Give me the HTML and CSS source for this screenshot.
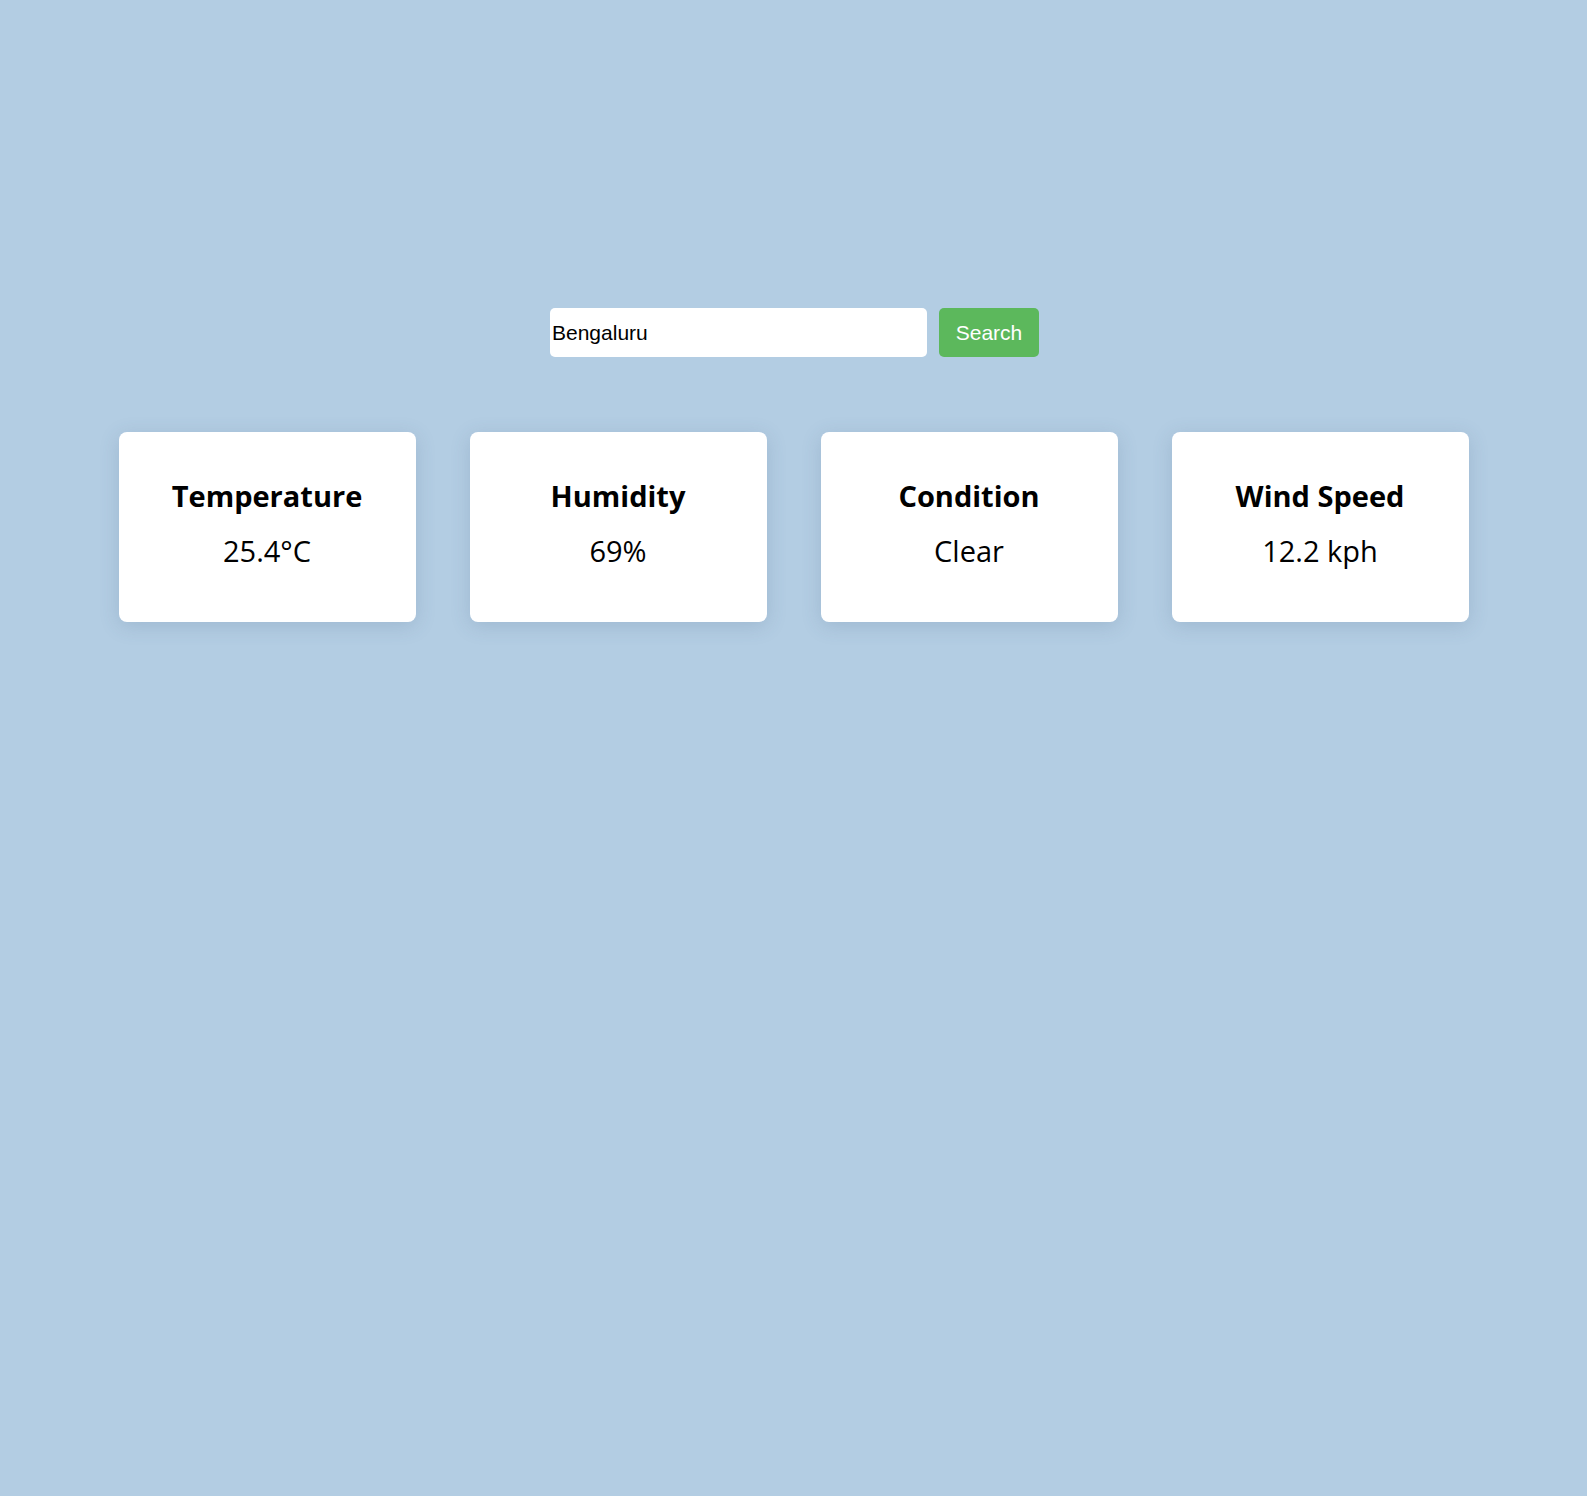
FILE: index.html
```html
<!DOCTYPE html>
<html lang="en">
<head>
<meta charset="utf-8">
<title>Weather</title>
<link rel="stylesheet" href="styles.css">
</head>
<body>
<main class="app">
  <form class="search" onsubmit="return false">
    <input class="search-input" type="text" value="Bengaluru">
    <button class="search-btn" type="submit">Search</button>
  </form>
  <section class="cards">
    <div class="card">
      <h3 class="card-title">Temperature</h3>
      <p class="card-value">25.4°C</p>
    </div>
    <div class="card">
      <h3 class="card-title">Humidity</h3>
      <p class="card-value">69%</p>
    </div>
    <div class="card">
      <h3 class="card-title">Condition</h3>
      <p class="card-value">Clear</p>
    </div>
    <div class="card">
      <h3 class="card-title">Wind Speed</h3>
      <p class="card-value">12.2 kph</p>
    </div>
  </section>
</main>
</body>
</html>
```

FILE: styles.css
```css
html, body {
  margin: 0;
  padding: 0;
}

body {
  background: #b3cde3;
  min-height: 1496px;
  font-family: "Open Sans", "Noto Sans", sans-serif;
  color: #000;
}

.app {
  display: flex;
  flex-direction: column;
  align-items: center;
  padding-top: 308px;
}

.search {
  display: flex;
  gap: 12px;
  margin: 0 0 0 2px;
}

.search-input {
  width: 377px;
  height: 49px;
  box-sizing: border-box;
  border: none;
  border-radius: 5px;
  padding: 0 2px;
  background: #fff;
  color: #000;
  font-family: "Liberation Sans", Arial, sans-serif;
  font-size: 21px;
  outline: none;
}

.search-btn {
  width: 100px;
  height: 49px;
  box-sizing: border-box;
  border: none;
  border-radius: 5px;
  background: #5cb85c;
  color: #fff;
  font-family: "Liberation Sans", Arial, sans-serif;
  font-size: 21px;
  padding: 0;
  cursor: pointer;
}

.cards {
  display: flex;
  justify-content: center;
  gap: 54px;
  margin-top: 75px;
}

.card {
  width: 297px;
  box-sizing: border-box;
  background: #fff;
  border-radius: 8px;
  box-shadow: 0 4px 20px rgba(60, 90, 120, 0.18);
  padding: 46px 10px 53px;
  text-align: center;
  display: flex;
  flex-direction: column;
  gap: 19px;
}

.card-title {
  margin: 0;
  font-size: 29px;
  line-height: 36px;
  font-weight: 700;
}

.card-value {
  margin: 0;
  font-size: 29px;
  line-height: 36px;
  font-weight: 400;
}
```
